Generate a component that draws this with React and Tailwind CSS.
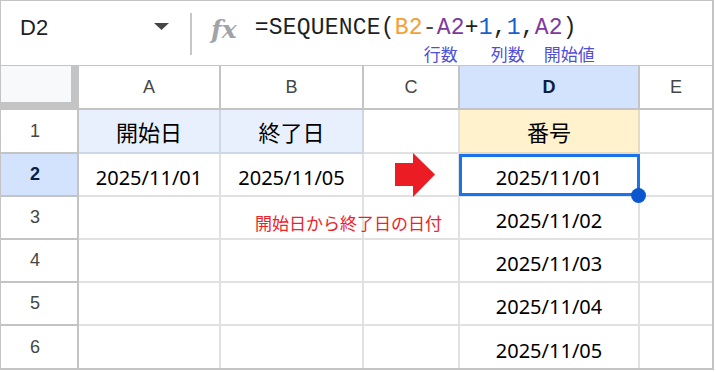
import React from "react";

const SANS = "font-['Liberation_Sans','Noto_Sans_CJK_JP',sans-serif]";
const CELL = "font-['Noto_Sans','Noto_Sans_CJK_JP',sans-serif]";
const CJK = "font-['Noto_Sans_CJK_JP','Noto_Sans',sans-serif]";

function ColHead({ label, active, last }) {
  return (
    <div
      className={
        "flex items-center justify-center border-b-2 border-[#c4c4c4] text-[18px] " +
        SANS +
        (last ? " border-r-0" : " border-r-2") +
        (active ? " bg-[#d3e3fd] font-bold text-[#0b1d42]" : " bg-white text-[#444746]")
      }
    >
      {label}
    </div>
  );
}

function RowHead({ label, active, last }) {
  return (
    <div
      className={
        "flex items-center justify-center pr-[8px] border-r-2 border-[#c4c4c4] text-[18px] " +
        SANS +
        (last ? " border-b-0" : " border-b-2") +
        (active ? " bg-[#d3e3fd] font-bold text-[#0b1d42]" : " bg-white text-[#444746]")
      }
    >
      {label}
    </div>
  );
}

export default function App() {
  const dates = ["2025/11/02", "2025/11/03", "2025/11/04", "2025/11/05"];
  return (
    <div className="w-[716px] h-[372px] bg-white overflow-hidden">
      <div className="w-[714px] h-[370px] border-l border-t border-r-2 border-b-2 border-[#c4c4c4] flex flex-col">
        {/* formula bar */}
        <div className="h-[65px] shrink-0 border-b border-[#c4c4c4] flex">
          <div className="w-[189px] flex items-start pl-[19px] pt-[13px]">
            <span className={"text-[22px] leading-[28px] text-[#1f1f1f] " + SANS}>D2</span>
            <svg className="ml-auto mr-[21px] mt-[9px]" width="15" height="8" viewBox="0 0 15 8">
              <polygon points="0,0 15,0 7.5,7" fill="#444746" />
            </svg>
          </div>
          <div className="w-[2px] h-[42px] mt-[12px] bg-[#c7c7c7]" />
          <div className="ml-[19px] mt-[15px]">
            <span className="font-['DejaVu_Serif',serif] italic font-bold text-[25px] leading-[28px] text-[#a0a4a8]">
              fx
            </span>
          </div>
          <div className="ml-[18px] flex flex-col">
            <div className="pt-[14px] font-['Liberation_Mono',monospace] text-[23px] leading-[26px] tracking-[0.2px] text-[#1f1f1f] whitespace-nowrap">
              <span>=SEQUENCE(</span>
              <span className="text-[#f5a031]">B2</span>
              <span className="text-[#444746]">-</span>
              <span className="text-[#7e3a9e]">A2</span>
              <span>+</span>
              <span className="text-[#1a5fd0]">1</span>
              <span>,</span>
              <span className="text-[#1a5fd0]">1</span>
              <span>,</span>
              <span className="text-[#7e3a9e]">A2</span>
              <span>)</span>
            </div>
            <div className={"mt-[3px] flex text-[17px] leading-[20px] text-[#4f4fd6] whitespace-nowrap " + CJK}>
              <span className="ml-[169px] w-[67px]">行数</span>
              <span className="w-[53px]">列数</span>
              <span>開始値</span>
            </div>
          </div>
        </div>

        {/* grid */}
        <div className="flex-1 grid grid-cols-[78px_142px_143px_96px_180px_1fr] grid-rows-[44px_44px_43px_43px_43px_43px_1fr]">
          {/* header row */}
          <div className="bg-[#f8f9fa] border-r-[8px] border-b-[8px] border-[#c4c4c4]" />
          <ColHead label="A" />
          <ColHead label="B" />
          <ColHead label="C" />
          <ColHead label="D" active />
          <ColHead label="E" last />

          {/* row 1 */}
          <RowHead label="1" />
          <div className={"flex items-center justify-center bg-[#e8f0fd] border-r-2 border-b-2 border-[#ccd8e6] text-[22px] text-black " + CJK}>開始日</div>
          <div className={"flex items-center justify-center bg-[#e8f0fd] border-r-2 border-b-2 border-[#ccd8e6] text-[22px] text-black " + CJK}>終了日</div>
          <div className="border-r-2 border-b-2 border-[#e1e1e1]" />
          <div className={"flex items-center justify-center bg-[#fff2cc] border-r-2 border-b-2 border-[#e5dcc2] text-[22px] text-black " + CJK}>番号</div>
          <div className="border-b-2 border-[#e1e1e1]" />

          {/* row 2 */}
          <RowHead label="2" active />
          <div className={"flex items-center justify-center pt-[7px] border-r-2 border-b-2 border-[#e1e1e1] text-[20px] leading-[24px] text-black " + CELL}>2025/11/01</div>
          <div className={"flex items-center justify-center pt-[7px] border-r-2 border-b-2 border-[#e1e1e1] text-[20px] leading-[24px] text-black " + CELL}>2025/11/05</div>
          <div className="relative border-r-2 border-b-2 border-[#e1e1e1]">
            <svg className="absolute left-[31px] -top-[1px] z-10" width="40" height="44" viewBox="0 0 40 44">
              <polygon points="0,10 18,10 18,0 40,21.5 18,44 18,33 0,33" fill="#ec1c24" />
            </svg>
          </div>
          <div className={"relative flex items-center justify-center pt-[7px] border-r-2 border-b-2 border-[#e1e1e1] text-[20px] leading-[24px] text-black " + CELL}>
            2025/11/01
            <div className="absolute -left-[1px] top-0 -right-[2px] -bottom-[1px] border-[3px] border-[#1a73e8] z-10" />
            <div className="absolute -right-[8px] -bottom-[8px] w-[15px] h-[15px] rounded-full bg-[#0b57d0] z-20" />
          </div>
          <div className="border-b-2 border-[#e1e1e1]" />

          {/* rows 3-6 */}
          {dates.map((d, i) => {
            const last = i === dates.length - 1;
            const bb = last ? " border-b-0" : " border-b-2";
            return (
              <React.Fragment key={d}>
                <RowHead label={String(i + 3)} last={last} />
                <div className={"border-r-2 border-[#e1e1e1]" + bb} />
                <div className={"relative border-r-2 border-[#e1e1e1]" + bb}>
                  {i === 0 && (
                    <span className={"absolute left-[34px] top-[16px] z-10 whitespace-nowrap text-[17px] leading-[20px] text-[#ec2328] " + CJK}>
                      開始日から終了日の日付
                    </span>
                  )}
                </div>
                <div className={"border-r-2 border-[#e1e1e1]" + bb} />
                <div className={"flex items-center justify-center pt-[7px] border-r-2 border-[#e1e1e1] text-[20px] leading-[24px] text-black " + CELL + bb}>{d}</div>
                <div className={"border-[#e1e1e1]" + bb} />
              </React.Fragment>
            );
          })}
        </div>
      </div>
    </div>
  );
}
